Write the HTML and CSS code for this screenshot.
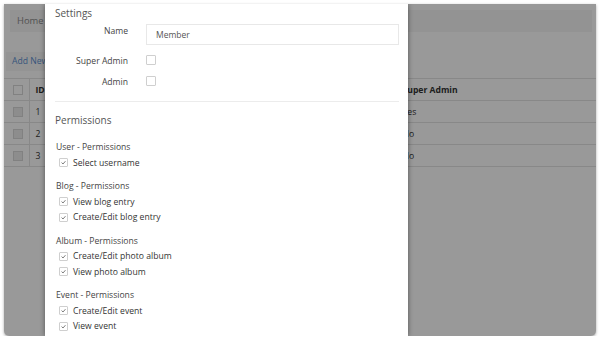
FILE: index.html
```html
<!DOCTYPE html>
<html lang="en">
<head>
  <meta charset="UTF-8" />
  <title>Roles - Settings</title>
  <link rel="stylesheet" href="styles.css">
</head>
<body>
  <div class="window">
    <div class="page">
      <div class="breadcrumb">Home</div>
      <div class="toolbar"><button class="add-btn">Add New</button></div>

      <table class="grid">
        <thead>
          <tr>
            <th class="col-check"><span class="box"></span></th>
            <th class="col-id">ID</th>
            <th class="col-name">Name</th>
            <th>Super Admin</th>
          </tr>
        </thead>
        <tbody>
          <tr><td class="col-check"><span class="box"></span></td><td>1</td><td>Administrator</td><td>Yes</td></tr>
          <tr><td class="col-check"><span class="box"></span></td><td>2</td><td>Editor</td><td>No</td></tr>
          <tr><td class="col-check"><span class="box"></span></td><td>3</td><td>Member</td><td>No</td></tr>
        </tbody>
      </table>
    </div>

    <div class="overlay"></div>

    <div class="modal">
      <h2 class="modal-title">Settings</h2>

      <div class="form-row first">
        <label class="form-label">Name</label>
        <input class="text-input" type="text" value="Member">
      </div>
      <div class="form-row">
        <label class="form-label">Super Admin</label>
        <span class="check"></span>
      </div>
      <div class="form-row">
        <label class="form-label">Admin</label>
        <span class="check"></span>
      </div>

      <hr class="divider">

      <h2 class="modal-title section">Permissions</h2>

      <div class="perm-group">
        <div class="perm-title">User - Permissions</div>
        <div class="perm-item"><span class="check on"><svg viewBox="0 0 9 9"><polyline points="2,4.6 3.9,6.4 7,2.8"/></svg></span><span>Select username</span></div>
      </div>

      <div class="perm-group">
        <div class="perm-title">Blog - Permissions</div>
        <div class="perm-item"><span class="check on"><svg viewBox="0 0 9 9"><polyline points="2,4.6 3.9,6.4 7,2.8"/></svg></span><span>View blog entry</span></div>
        <div class="perm-item"><span class="check on"><svg viewBox="0 0 9 9"><polyline points="2,4.6 3.9,6.4 7,2.8"/></svg></span><span>Create/Edit blog entry</span></div>
      </div>

      <div class="perm-group">
        <div class="perm-title">Album - Permissions</div>
        <div class="perm-item"><span class="check on"><svg viewBox="0 0 9 9"><polyline points="2,4.6 3.9,6.4 7,2.8"/></svg></span><span>Create/Edit photo album</span></div>
        <div class="perm-item"><span class="check on"><svg viewBox="0 0 9 9"><polyline points="2,4.6 3.9,6.4 7,2.8"/></svg></span><span>View photo album</span></div>
      </div>

      <div class="perm-group">
        <div class="perm-title">Event - Permissions</div>
        <div class="perm-item"><span class="check on"><svg viewBox="0 0 9 9"><polyline points="2,4.6 3.9,6.4 7,2.8"/></svg></span><span>Create/Edit event</span></div>
        <div class="perm-item"><span class="check on"><svg viewBox="0 0 9 9"><polyline points="2,4.6 3.9,6.4 7,2.8"/></svg></span><span>View event</span></div>
      </div>
    </div>
  </div>
</body>
</html>
```

FILE: styles.css
```css
body {
  margin: 0;
  background: #fff;
  font-family: "Open Sans", "DejaVu Sans", sans-serif;
  color: #333;
}
.window {
  position: relative;
  margin: 4px 6px 0 4px;
  height: 332px;
  overflow: hidden;
  border-radius: 0 0 5px 5px;
  box-shadow: 0 1px 3px rgba(0, 0, 0, 0.35);
  background: #fff;
}
.page {
  padding-top: 6px;
}
.breadcrumb {
  margin: 0 4px 0 6px;
  height: 22px;
  line-height: 22px;
  padding-left: 7px;
  background: #f5f5f5;
  color: #8a8a8a;
  font-size: 9.4px;
}
.toolbar {
  padding: 15px 0 0 2px;
  height: 19px;
}
.add-btn {
  height: 19px;
  padding: 0 6px;
  border: none;
  background: #f7f7f7;
  color: #5b8fd0;
  font-family: inherit;
  font-size: 8.6px;
}
.grid {
  margin-top: 12px;
  width: 100%;
  table-layout: fixed;
  border-collapse: collapse;
  font-size: 8.6px;
  color: #333;
}
.grid th, .grid td {
  height: 21px;
  padding: 0 0 0 6px;
  text-align: left;
  border-top: 1px solid #e3e3e3;
  border-bottom: 1px solid #e3e3e3;
}
.grid th {
  font-weight: bold;
}
.grid .col-check {
  width: 25px;
  padding: 0 0 0 9px;
  box-sizing: border-box;
  border-right: 1px solid #e3e3e3;
}
.grid .col-id {
  width: 60px;
}
.grid .col-name {
  width: 295px;
}
.box {
  display: block;
  width: 10px;
  height: 10px;
  box-sizing: border-box;
  border: 1px solid #d8d8d8;
  background: #ececec;
}
.grid th .box {
  background: #fff;
}
.overlay {
  position: absolute;
  inset: 0;
  background: rgba(0, 0, 0, 0.4);
}
.modal {
  position: absolute;
  top: 0;
  bottom: 0;
  left: 41px;
  width: 363px;
  box-sizing: border-box;
  padding: 1px 9px 0 10px;
  background: #fff;
  box-shadow: 0 0 5px rgba(0, 0, 0, 0.45);
}
.modal-title {
  margin: 0;
  font-size: 10px;
  font-weight: normal;
  line-height: 16px;
  color: #555;
}
.modal-title.section {
  margin-top: 10px;
  margin-bottom: 12px;
}
.form-row {
  display: flex;
  gap: 18px;
  height: 21px;
  font-size: 8.6px;
}
.form-row.first {
  margin-top: 3px;
  margin-bottom: 9px;
}
.form-label {
  width: 73px;
  text-align: right;
  line-height: 15px;
  color: #444;
}
.text-input {
  flex: 1;
  height: 21px;
  box-sizing: border-box;
  padding: 0 9px;
  border: 1px solid #e8e8e8;
  font-family: inherit;
  font-size: 8.5px;
  color: #555;
}
.form-row .check {
  margin-top: 1px;
}
.check {
  display: inline-block;
  flex: none;
  width: 10px;
  height: 10px;
  box-sizing: border-box;
  border: 1px solid #cfcfcf;
  border-radius: 1px;
  background: #fff;
}
.check svg {
  display: block;
  width: 8px;
  height: 8px;
  fill: none;
  stroke: #666;
  stroke-width: 1.1;
}
.divider {
  margin: 5px 0 0;
  border: none;
  border-top: 1px solid #ececec;
}
.perm-group {
  margin-bottom: 8.5px;
  font-size: 8.6px;
}
.perm-title {
  line-height: 15px;
  padding-left: 1px;
  color: #444;
}
.perm-item {
  display: flex;
  align-items: center;
  gap: 5px;
  height: 15.5px;
  padding-left: 4px;
  color: #333;
}
.perm-item .check {
  width: 9px;
  height: 9px;
}
.perm-item .check svg {
  width: 7px;
  height: 7px;
}
```
